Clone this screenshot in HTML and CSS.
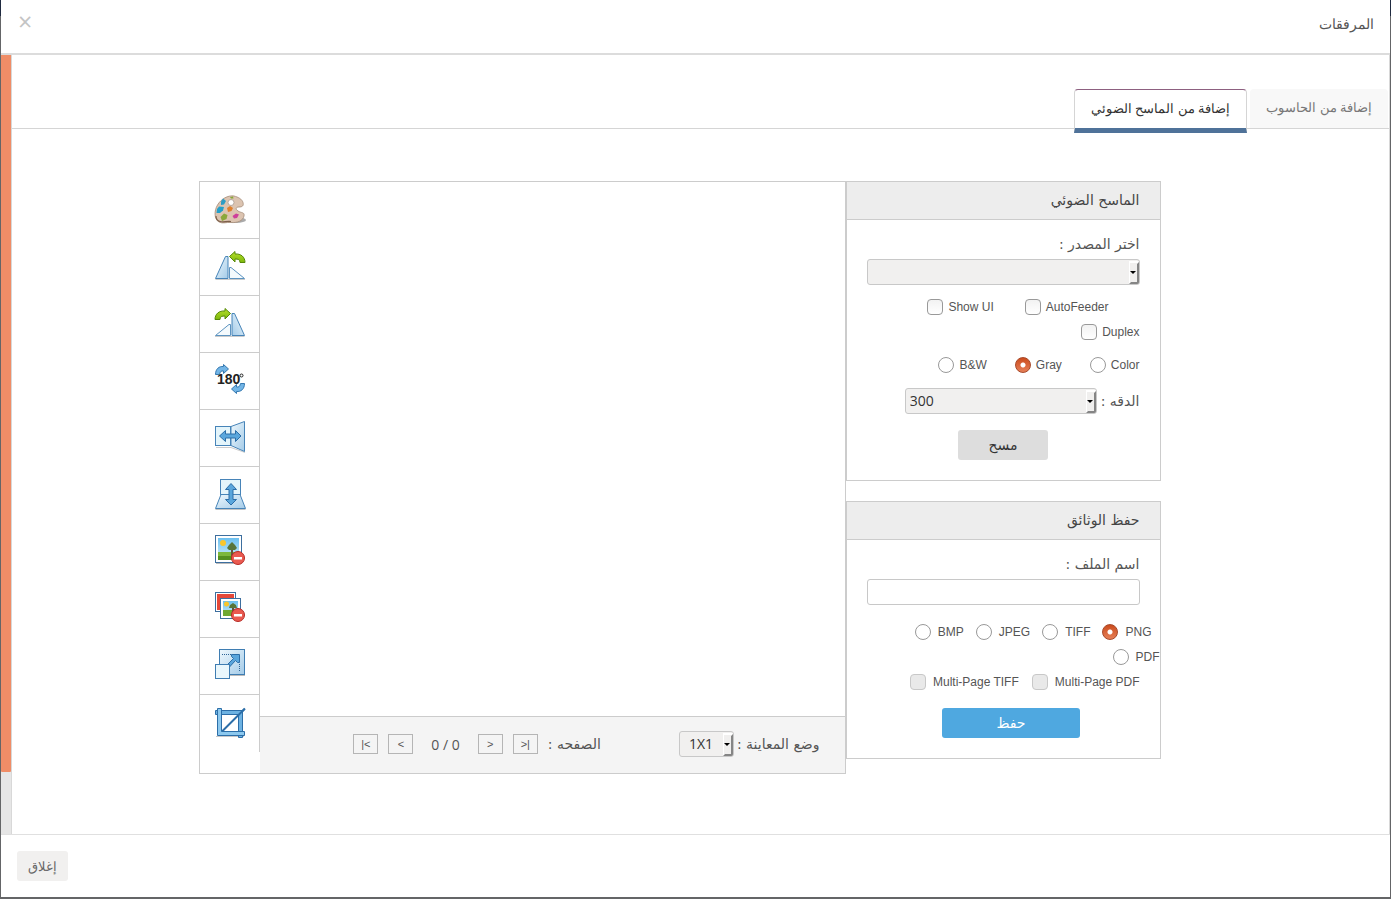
FILE: index.html
```
<!DOCTYPE html>
<html lang="ar" dir="rtl">
<head>
    <meta charset="UTF-8">
    <meta name="viewport" content="width=device-width, initial-scale=1.0">
    <title>المرفقات</title>
    <link rel="stylesheet" href="styles.css">
</head>
<body>
    <div class="modal">
        <header class="modal-header">
            <h1>المرفقات</h1>
            <button type="button" class="close" aria-label="إغلاق">×</button>
        </header>

        <div class="modal-body">
            <div class="body-content">
                <nav class="tabs">
                    <a href="#computer" class="tab">إضافة من الحاسوب</a>
                    <a href="#scanner" class="tab active">إضافة من الماسح الضوئي</a>
                </nav>

                <div class="scanner" id="scanner">
                    <div class="panels">
                        <section class="panel">
                            <h2>الماسح الضوئي</h2>
                            <div class="panel-body">
                                <label class="field-label" for="source">اختر المصدر :</label>
                                <select id="source" class="control"></select>
                                <div class="options scan-flags">
                                    <label class="option indent"><input type="checkbox">AutoFeeder</label>
                                    <label class="option"><input type="checkbox">Show UI</label>
                                    <label class="option"><input type="checkbox">Duplex</label>
                                </div>
                                <div class="options scan-colors">
                                    <label class="option"><input type="radio" name="color">Color</label>
                                    <label class="option"><input type="radio" name="color" checked>Gray</label>
                                    <label class="option"><input type="radio" name="color">B&amp;W</label>
                                </div>
                                <div class="resolution">
                                    <label for="resolution">الدقه :</label>
                                    <select id="resolution" class="control"><option>300</option></select>
                                </div>
                                <div class="actions">
                                    <button type="button" class="btn btn-scan">مسح</button>
                                </div>
                            </div>
                        </section>

                        <section class="panel">
                            <h2>حفظ الوثائق</h2>
                            <div class="panel-body">
                                <label class="field-label" for="filename">اسم الملف :</label>
                                <input type="text" id="filename" class="control text">
                                <div class="options formats">
                                    <label class="option"><input type="radio" name="format" checked>PNG</label>
                                    <label class="option"><input type="radio" name="format">TIFF</label>
                                    <label class="option"><input type="radio" name="format">JPEG</label>
                                    <label class="option"><input type="radio" name="format">BMP</label>
                                </div>
                                <div class="options formats-extra">
                                    <label class="option"><input type="radio" name="format">PDF</label>
                                </div>
                                <div class="options multi-page">
                                    <label class="option"><input type="checkbox" disabled>Multi-Page PDF</label>
                                    <label class="option"><input type="checkbox" disabled>Multi-Page TIFF</label>
                                </div>
                                <div class="actions actions-save">
                                    <button type="button" class="btn btn-save">حفظ</button>
                                </div>
                            </div>
                        </section>
                    </div>

                    <div class="viewer">
                        <div class="viewer-main">
                            <div class="preview"></div>
                            <div class="viewer-bar">
                                <label for="mode">وضع المعاينة :</label>
                                <select id="mode" class="control mode"><option>1X1</option></select>
                                <span class="page-label">الصفحه :</span>
                                <button type="button" class="page-btn">&gt;|</button>
                                <button type="button" class="page-btn">&gt;</button>
                                <span class="page-count">0 / 0</span>
                                <button type="button" class="page-btn">&lt;</button>
                                <button type="button" class="page-btn">|&lt;</button>
                            </div>
                        </div>

                        <div class="toolbar">
                            <button type="button" title="Edit image">
                                <svg viewBox="0 0 32 32">
                                    <ellipse cx="22" cy="26" rx="10" ry="3" fill="#555" opacity=".5"/>
                                    <path d="M20 2C14 1 7 5 3.500 11C0 17 0 25 5 28C9 30 12 28 17 28.500C23 29 29 27 30 22C31 18 27 19 24 17C21 15 22 13 25 13C28 13 30 12 29 8.500C28 5 24 3 20 2Z" fill="#dcc4b1" stroke="#a58b77" stroke-width=".8"/>
                                    <path d="M2 22C2 25 4 27 6 27.500C10 28.500 12 27 17 27.500" fill="none" stroke="#7d604b" stroke-width="1.200"/>
                                    <circle cx="17" cy="8.500" r="3" fill="#fff" stroke="#a99a90" stroke-width=".8"/>
                                    <path d="M16 3L19 2.500L19.500 4.500L17 4.500Z" fill="#86a838"/>
                                    <path d="M7 7.500L9 4.500L12 7L10 10.500L7 11Z" fill="#2c9dc6"/>
                                    <path d="M3 15L5 12.500L10 13L9 16.500L6 19L2.500 19Z" fill="#249fc9"/>
                                    <path d="M13 14L16 12L19 14L17.500 17L14 18Z" fill="#e0802e"/>
                                    <path d="M6.500 23L10 19.500L13.500 21L12.500 25L8 27Z" fill="#8ba83c"/>
                                    <path d="M18.500 22L22 19.500L25 20.500L23 24L20 24.500Z" fill="#ce3f9b"/>
                                </svg>
                            </button>
                            <button type="button" title="Rotate left">
                                <svg viewBox="0 0 32 32">
                                    <defs>
                                        <linearGradient id="blue" x1="0" y1="0" x2="1" y2="1">
                                            <stop offset="0" stop-color="#eef8fd"/>
                                            <stop offset="1" stop-color="#a4cbe8"/>
                                        </linearGradient>
                                        <linearGradient id="green" x1="0" y1="0" x2="0" y2="1">
                                            <stop offset="0" stop-color="#b7e02a"/>
                                            <stop offset="1" stop-color="#7db80c"/>
                                        </linearGradient>
                                        <linearGradient id="sky" x1="0" y1="0" x2="0" y2="1">
                                            <stop offset="0" stop-color="#6cc0ef"/>
                                            <stop offset="1" stop-color="#d5f0fb"/>
                                        </linearGradient>
                                    </defs>
                                    <path d="M1.500 28.500H31" stroke="#999" opacity=".5"/>
                                    <path d="M11.500 5.500H14V27.500H1.500Z" fill="url(#blue)" stroke="#4784b8"/>
                                    <path d="M15.500 16.500H17L30.500 27.500H15.500Z" fill="#f4fafd" stroke="#5c93c0"/>
                                    <path d="M15.500 5.500L21 .5V3C27 2.500 31 6 31 11.500H26C26 8.500 24 8 21 8V11Z" fill="url(#green)" stroke="#568808"/>
                                </svg>
                            </button>
                            <button type="button" title="Rotate right">
                                <svg viewBox="0 0 32 32">
                                    <g transform="translate(32 0) scale(-1 1)">
                                        <path d="M1.500 28.500H31" stroke="#999" opacity=".5"/>
                                        <path d="M11.500 5.500H14V27.500H1.500Z" fill="url(#blue)" stroke="#4784b8"/>
                                        <path d="M15.500 16.500H17L30.500 27.500H15.500Z" fill="#f4fafd" stroke="#5c93c0"/>
                                        <path d="M15.500 5.500L21 .5V3C27 2.500 31 6 31 11.500H26C26 8.500 24 8 21 8V11Z" fill="url(#green)" stroke="#568808"/>
                                    </g>
                                </svg>
                            </button>
                            <button type="button" title="Rotate 180">
                                <svg viewBox="0 0 32 32">
                                    <path d="M1.500 9.500C1.500 4 5 1 9.500 1.500V-.5L14.500 4L9.500 8.500V6C7 5.500 6 7 5.500 9.500Z" fill="#72b5e6" stroke="#3478b0"/>
                                    <path d="M30.500 18.500C30.500 24 27 27 22.500 26.500V28.500L17.500 24L22.500 19.500V22C25 22.500 26 21 26.500 18.500Z" fill="#72b5e6" stroke="#3478b0"/>
                                    <text x="3" y="19" class="degrees">180</text>
                                    <circle cx="27.500" cy="10.500" r="1.500" fill="none" stroke="#222"/>
                                </svg>
                            </button>
                            <button type="button" title="Mirror">
                                <svg viewBox="0 0 32 32">
                                    <path d="M2 25.500H17L31 30.500" fill="none" stroke="#999" opacity=".5"/>
                                    <rect x="1.500" y="4.500" width="15" height="19" fill="#e4f5fb" stroke="#4784b8"/>
                                    <path d="M17 4.500L30.500 -.5V29.500L17 23.500Z" fill="url(#blue)" stroke="#4784b8"/>
                                    <path d="M5.500 14L11.500 8.500V12H21.500V8.500L27 14L21.500 19.500V16H11.500V19.500Z" fill="#5aa6dc" stroke="#2c6ea8"/>
                                </svg>
                            </button>
                            <button type="button" title="Flip">
                                <svg viewBox="0 0 32 32">
                                    <path d="M1.500 30.500H31.500" stroke="#888" opacity=".5"/>
                                    <rect x="6.500" y=".5" width="20" height="15" fill="#e4f5fb" stroke="#4784b8"/>
                                    <path d="M7 15.500H26L31.500 29.500H1.500Z" fill="url(#blue)" stroke="#4784b8"/>
                                    <path d="M17 4.500L22.500 10.500H19V20.500H22.500L17 26L11.500 20.500H15V10.500H11.500Z" fill="#5aa6dc" stroke="#2c6ea8"/>
                                </svg>
                            </button>
                            <button type="button" title="Remove current image">
                                <svg viewBox="0 0 32 32">
                                    <path d="M2 27.500H27" stroke="#777" opacity=".5"/>
                                    <rect x="1.500" y="-.5" width="26" height="27" fill="#fff" stroke="#3d6f9f"/>
                                    <rect x="4" y="2" width="21" height="22" fill="url(#sky)"/>
                                    <rect x="4" y="16" width="21" height="5" fill="#7cb83c"/>
                                    <rect x="4" y="20" width="21" height="4" fill="#549020"/>
                                    <circle cx="9" cy="7" r="3" fill="#fac62b"/>
                                    <rect x="17" y="13" width="2" height="7" fill="#65543c"/>
                                    <path d="M18 6L21 9L23 12L21 14H15L13 12L15 9Z" fill="#58753a"/>
                                    <circle cx="24" cy="22" r="6.500" fill="#ea5a50" stroke="#b62a24"/>
                                    <rect x="20" y="21" width="8" height="2.500" fill="#fff"/>
                                </svg>
                            </button>
                            <button type="button" title="Remove all images">
                                <svg viewBox="0 0 32 32">
                                    <rect x="1.500" y="-.5" width="20" height="19" fill="#fff" stroke="#3d6f9f"/>
                                    <rect x="3" y="1" width="17" height="16" fill="#e54839"/>
                                    <rect x="6.500" y="5.500" width="20" height="20" fill="#fff" stroke="#3d6f9f"/>
                                    <rect x="9" y="8" width="15" height="15" fill="url(#sky)"/>
                                    <rect x="9" y="17" width="15" height="6" fill="#6fa832"/>
                                    <circle cx="12.500" cy="11" r="2.500" fill="#fac62b"/>
                                    <rect x="18" y="14" width="2" height="5" fill="#65543c"/>
                                    <path d="M19 10L22 12L23 15H15L16 12Z" fill="#58753a"/>
                                    <circle cx="24" cy="22" r="6.500" fill="#ea5a50" stroke="#b62a24"/>
                                    <rect x="20" y="21" width="8" height="2.500" fill="#fff"/>
                                </svg>
                            </button>
                            <button type="button" title="Change image size">
                                <svg viewBox="0 0 32 32">
                                    <path d="M6 25.500H31" stroke="#777" opacity=".5"/>
                                    <rect x="5.500" y="-.5" width="25" height="25" fill="url(#blue)" stroke="#3f7db2"/>
                                    <path d="M8 4.500H18M25.500 14V22" fill="none" stroke="#2d6496" stroke-dasharray="1 1"/>
                                    <path d="M13 15L19.500 8.500L17.500 6.500V4.500H25.500V12.500H23.500L21.500 10.500L15.500 17Z" fill="#5aa6dc" stroke="#2c6ea8"/>
                                    <rect x="1.500" y="14.500" width="14" height="14" fill="#eaf7fc" stroke="#3f7db2"/>
                                </svg>
                            </button>
                            <button type="button" title="Crop">
                                <svg viewBox="0 0 32 32">
                                    <path d="M2 28.500H30" stroke="#777" opacity=".4"/>
                                    <path d="M7.500 24L31 .5" stroke="#2c6ea8" stroke-width="2"/>
                                    <path d="M1.500 2.500H28.500V29.500H24.500V6.500H1.500Z" fill="#6db2e2" stroke="#2c6ea8"/>
                                    <path d="M3.500 .5H7.500V23.500H30.500V27.500H3.500Z" fill="#8cc8ee" stroke="#2c6ea8"/>
                                    <path d="M24 7.500L30.500 1" stroke="#2c6ea8" stroke-width="2"/>
                                </svg>
                            </button>
                        </div>
                    </div>
                </div>
            </div>

            <div class="scrollbar"><div class="scrollbar-thumb"></div></div>
        </div>

        <footer class="modal-footer">
            <button type="button" class="btn btn-close">إغلاق</button>
        </footer>
    </div>
</body>
</html>
```
FILE: styles.css
```
* {
    box-sizing: border-box;
}

body {
    margin: 0;
    background: linear-gradient(#1f2a40 16px, #646567 16px);
    color: #555;
    font-family: "DejaVu Sans", sans-serif;
    font-size: 14px;
}

button, select, input {
    margin: 0;
    font-family: inherit;
}

button {
    cursor: pointer;
}

.modal {
    display: flex;
    flex-direction: column;
    min-height: 100vh;
    border: solid transparent;
    border-width: 0 1px 2px;
    background: #fff padding-box;
}

/* header */
.modal-header {
    display: flex;
    justify-content: space-between;
    align-items: flex-start;
    height: 55px;
    padding: 0 16px;
    border-bottom: 2px solid #dcdcdc;
}

.modal-header h1 {
    margin: 0;
    font-family: "Open Sans", sans-serif;
    font-size: 14px;
    font-weight: normal;
    line-height: 48px;
}

.close {
    padding: 0 1px;
    border: 0;
    background: none;
    color: #c4c4c4;
    font-family: "Open Sans", sans-serif;
    font-size: 25px;
    line-height: 42px;
}

/* body */
.modal-body {
    display: flex;
    flex: 1;
}

.body-content {
    flex: 1;
    border: solid #d8d8d8;
    border-width: 0 1px;
}

.scrollbar {
    width: 10px;
    background-color: #e6e6e6;
}

.scrollbar-thumb {
    height: 92%;
    background-color: #f08d67;
    border-radius: 0 0 1px 1px;
}

.tabs {
    display: flex;
    gap: 3px;
    height: 74px;
    padding: 34px 1px 0;
    border-bottom: 1px solid #d5d5d5;
    font-family: "Open Sans", sans-serif;
    font-size: 13px;
}

.tab {
    height: 39px;
    padding: 0 16px;
    border-radius: 4px 4px 0 0;
    background-color: #f8f8f8;
    color: #777;
    line-height: 36px;
    text-decoration: none;
}

.tab.active {
    height: 44px;
    border: 1px solid #d5d5d5;
    border-top-color: #8d6080;
    border-bottom: 5px solid #4f7299;
    background-color: #fff;
    color: #333;
}

.scanner {
    display: flex;
    justify-content: center;
    align-items: flex-start;
    padding: 52px 42px 60px 0;
}

/* panels */
.panels {
    display: flex;
    flex-direction: column;
    gap: 20px;
    width: 315px;
}

.panel {
    border: 1px solid #ccc;
}

.panel h2 {
    margin: 0;
    padding: 0 20px;
    border-bottom: 1px solid #ccc;
    background-color: #ededed;
    color: #444;
    font-size: 14px;
    font-weight: normal;
    line-height: 37px;
}

.panel-body {
    padding: 12px 20px 20px;
}

.field-label {
    display: block;
    line-height: 24px;
    margin-bottom: 3px;
}

.control {
    display: block;
    direction: ltr;
    appearance: none;
    width: 100%;
    height: 26px;
    padding: 0 4px 2px;
    border: 1px solid #c8c8c8;
    border-radius: 3px;
    background: #f1f0ef url("data:image/svg+xml,%3Csvg xmlns='http://www.w3.org/2000/svg' width='10' height='23'%3E%3Cpath fill='%23fff' d='M0 0h10v23H0z'/%3E%3Cpath fill='%23858585' d='M10 1v22H0l2-2h6V3z'/%3E%3Cpath fill='%23f0efee' d='M1 2h7v19H1z'/%3E%3Cpath d='M1 10h6L4 13z'/%3E%3C/svg%3E") no-repeat right 0 top 1px;
    color: #333;
    font-family: "Open Sans", sans-serif;
    font-size: 14px;
}

.control.text {
    background: #fff;
}

.options {
    display: flex;
    flex-wrap: wrap;
    font-family: "Liberation Sans", Arial, sans-serif;
    font-size: 12px;
}

.option {
    display: flex;
    direction: ltr;
    align-items: center;
    gap: 5px;
    height: 25px;
    white-space: nowrap;
}

.option input {
    appearance: none;
    flex: none;
    width: 16px;
    height: 16px;
    border: 1px solid #999;
    border-radius: 4px;
    background: linear-gradient(#f2f2f2, #fff);
}

.option input[type="radio"] {
    border-radius: 50%;
    background: #fff;
}

.option input[type="radio"]:checked {
    border-color: #a8492a;
    background: radial-gradient(circle, #fff 2px, transparent 3px), linear-gradient(#cb4b1c, #e68058);
}

.option input:disabled {
    border-color: #c8c8c8;
    background: #e9e9e9;
}

.scan-flags {
    column-gap: 31px;
    margin-top: 9px;
}

.option.indent {
    margin-right: 31px;
}

.scan-colors {
    column-gap: 28px;
    margin-top: 8px;
}

.formats .option, .formats-extra .option, .multi-page .option {
    gap: 7px;
}

/* format rows run into the panel padding */
.formats {
    column-gap: 12px;
    margin: 14px -12px 0 0;
}

.formats-extra {
    margin-right: -20px;
}

.multi-page {
    column-gap: 13px;
}

.resolution {
    display: flex;
    align-items: center;
    gap: 4px;
    margin-top: 11px;
}

.resolution .control {
    width: 192px;
}

.actions {
    display: flex;
    justify-content: center;
    margin-top: 16px;
}

.actions-save {
    margin: 14px -16px 0 0;
}

.btn {
    height: 30px;
    padding: 0;
    border: 0;
    border-radius: 3px;
    font-size: 14px;
}

.btn-scan {
    width: 90px;
    background-color: #ddd;
    color: #333;
}

.btn-save {
    width: 138px;
    background-color: #4fa8e0;
    color: #fff;
}

/* viewer */
.viewer {
    display: flex;
    align-items: flex-start;
    border: 1px solid #ccc;
}

.viewer-main {
    width: 585px;
}

.preview {
    height: 534px;
}

.viewer-bar {
    display: flex;
    align-items: center;
    height: 57px;
    padding: 0 25px 2px 0;
    border-top: 1px solid #ccc;
    background-color: #f4f4f4;
}

.control.mode {
    width: 55px;
    margin-right: 3px;
    padding: 0 9px 2px;
}

.page-label {
    margin-right: 78px;
}

.page-btn {
    direction: ltr;
    width: 25px;
    height: 20px;
    margin-right: 10px;
    padding: 0;
    border: 1px solid #b5b5b5;
    background-color: #f4f4f4;
    color: #555;
    font-family: "Liberation Sans", Arial, sans-serif;
    font-size: 11px;
}

.page-count {
    margin: 0 18px 0 8px;
    direction: ltr;
    font-family: "Open Sans", sans-serif;
}

.toolbar {
    display: flex;
    flex-direction: column;
    width: 60px;
}

.toolbar button {
    display: flex;
    justify-content: center;
    align-items: center;
    height: 57px;
    padding: 0 0 0 2px;
    border: solid #ccc;
    border-width: 0 1px 1px 0;
    background-color: #fff;
}

.toolbar button:last-child {
    border-bottom: 0;
}

.toolbar svg {
    width: 32px;
    height: 32px;
    overflow: visible;
}

.degrees {
    direction: ltr;
    fill: #222;
    font-family: "Liberation Sans", Arial, sans-serif;
    font-size: 14px;
    font-weight: bold;
}

/* footer */
.modal-footer {
    display: flex;
    justify-content: flex-end;
    align-items: center;
    height: 63px;
    padding: 0 16px;
    border-top: 1px solid #e0e0e0;
}

.btn-close {
    width: 51px;
    background-color: #f1f0ef;
    color: #666;
    font-family: "Open Sans", sans-serif;
    font-size: 13px;
}
```
